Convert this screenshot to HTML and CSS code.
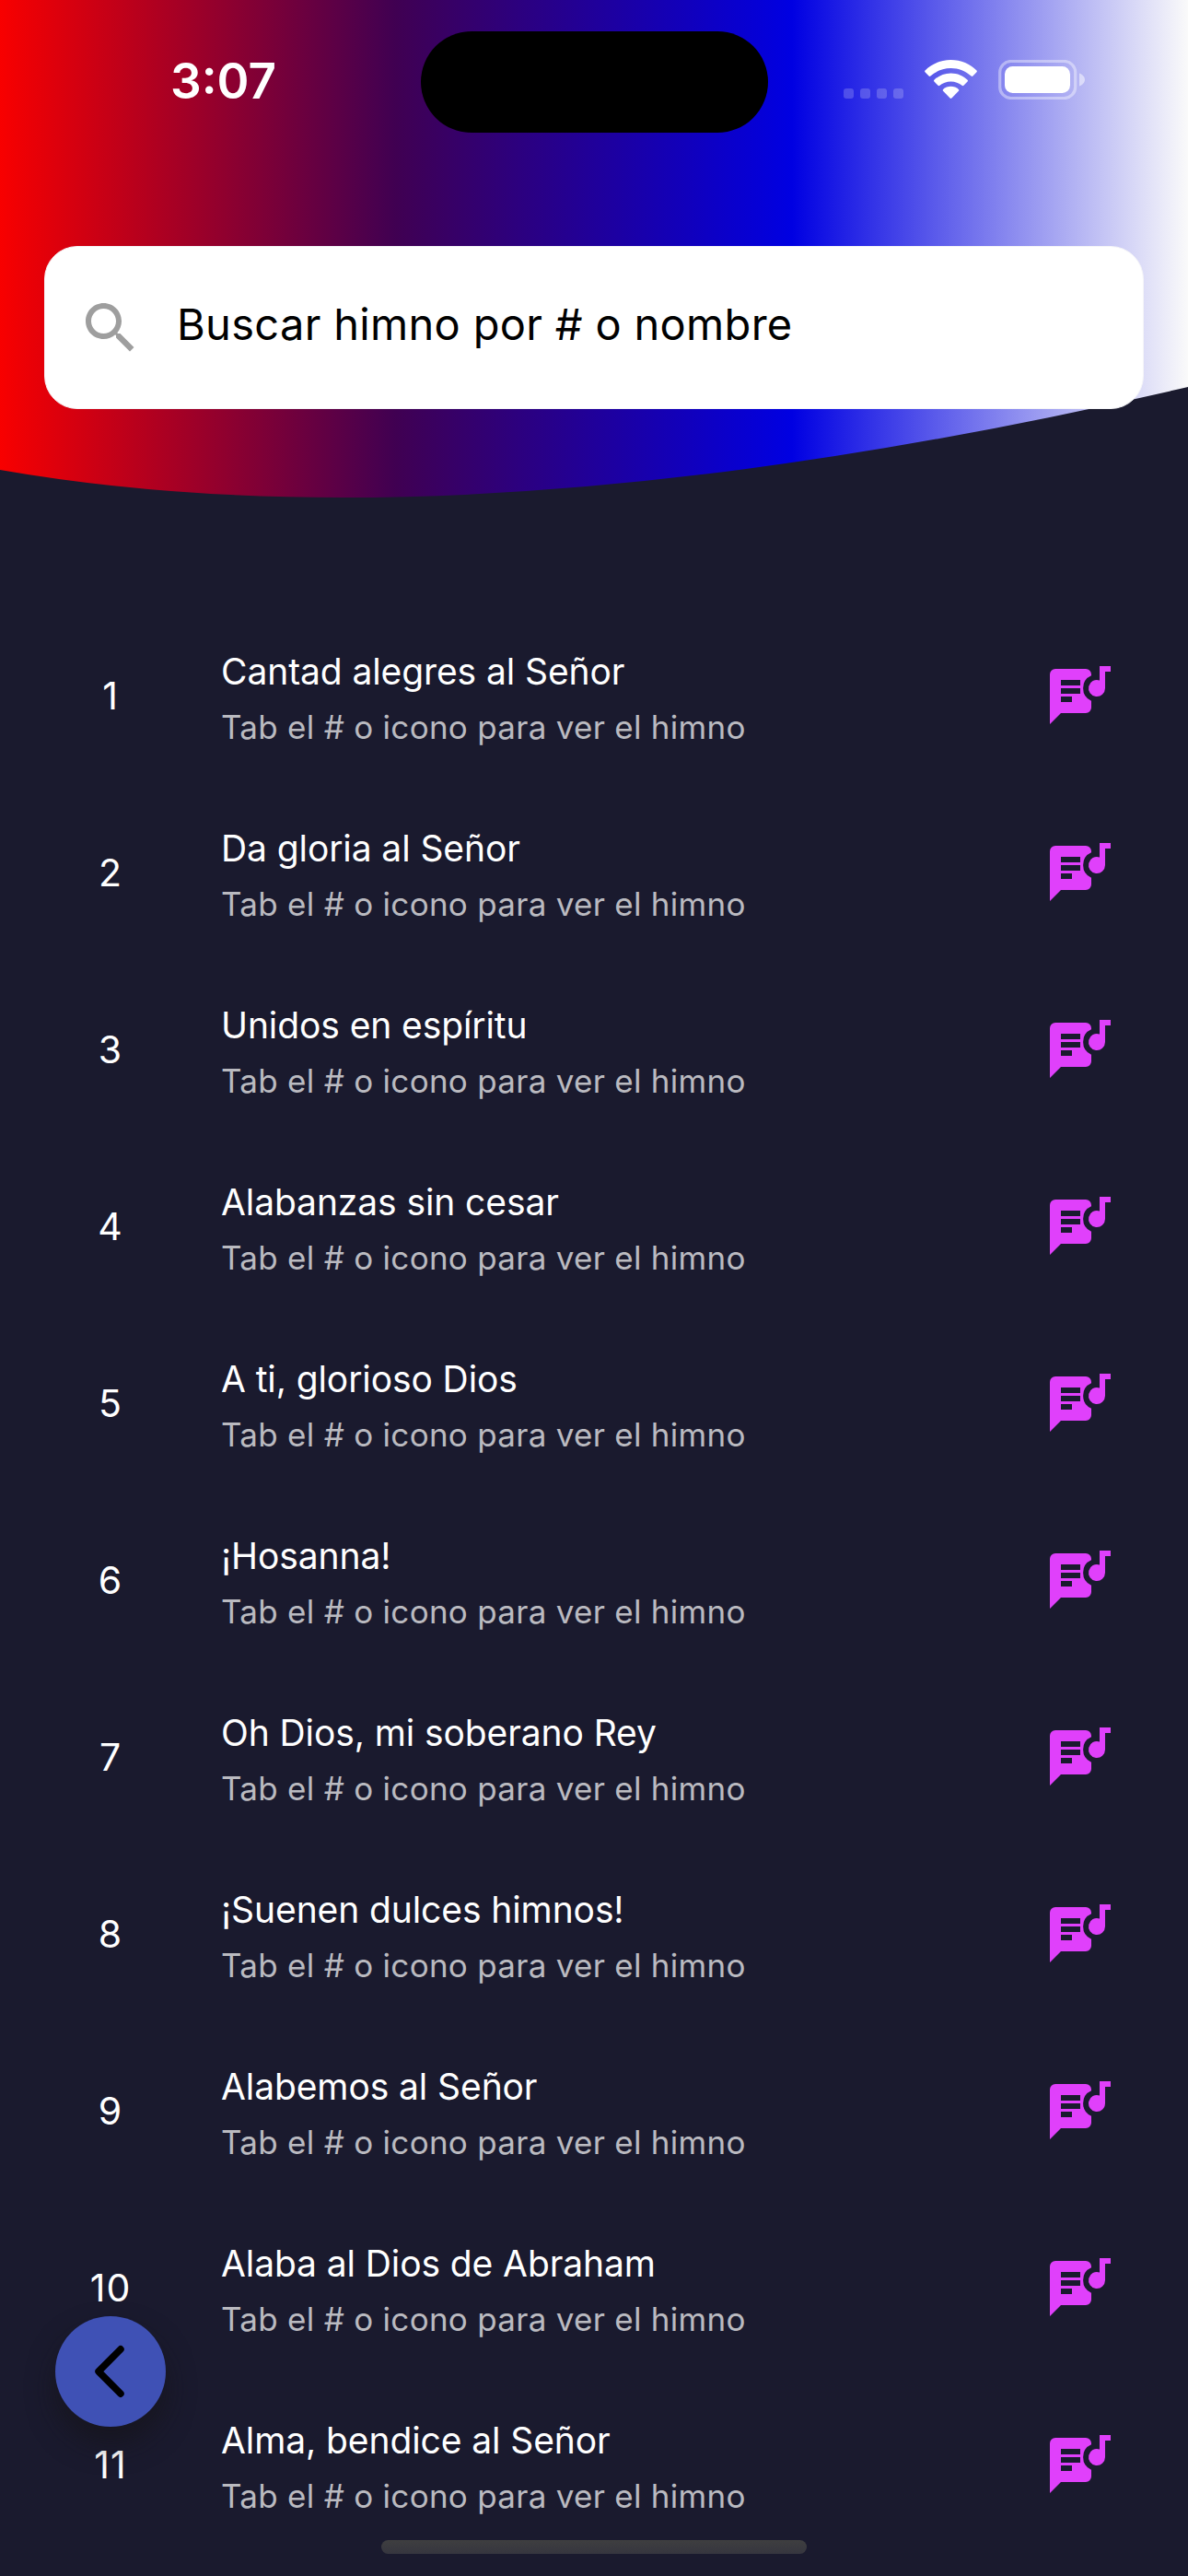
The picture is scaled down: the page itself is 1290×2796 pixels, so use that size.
FILE: index.html
```html
<!DOCTYPE html>
<html lang="es">
<head>
<meta charset="utf-8">
<title>Himnario</title>
<link rel="stylesheet" href="styles.css">
</head>
<body>
<svg class="defs" width="0" height="0" aria-hidden="true">
  <symbol id="lyrics" viewBox="0 0 66 63">
    <path fill-rule="evenodd" d="M6 3H39A6 6 0 0 1 45 9V10.3A15 15 0 0 0 45 37.7V45A6 6 0 0 1 39 51H12L0 63V9A6 6 0 0 1 6 3ZM12 15H33V21H12ZM12 24H33V30H12ZM12 33H24V39H12Z"/>
    <path d="M54 0H66V6H60V24A9 9 0 1 1 54 15.5Z"/>
  </symbol>
</svg>
<div class="screen">
  <header class="header">
    <svg class="header-bg" viewBox="0 0 1290 600" aria-hidden="true">
      <defs>
        <linearGradient id="flag" x1="0" x2="1" y1="0" y2="0">
          <stop offset="0" stop-color="#f80000"/>
          <stop offset=".3333" stop-color="#400052"/>
          <stop offset=".6667" stop-color="#0000e2"/>
          <stop offset="1" stop-color="#fafafa"/>
        </linearGradient>
      </defs>
      <path fill="url(#flag)" d="M0 0V510Q516 600 1290 420V0Z"/>
    </svg>
    <div class="status">
      <span class="time">3:07</span>
      <span class="island"></span>
      <div class="indicators">
        <div class="cell"><i></i><i></i><i></i><i></i></div>
        <svg class="wifi" viewBox="0 0 57 42" fill="#fff">
          <path d="M28.5 0C39.5 0 49.5 4.5 56.5 11.4Q57.3 12.3 56.5 13.2L52.4 17.6Q51.5 18.4 50.6 17.6C44.7 12.2 37 9 28.5 9S12.3 12.2 6.4 17.6Q5.5 18.4 4.6 17.6L.5 13.2Q-.3 12.3 .5 11.4C7.5 4.5 17.5 0 28.5 0Z"/>
          <path d="M28.5 14.5C35.5 14.5 41.9 17.3 46.6 21.7Q47.4 22.6 46.6 23.5L42.4 27.8Q41.5 28.6 40.6 27.8C37.4 25 33.1 23.4 28.5 23.4S19.6 25 16.4 27.8Q15.5 28.6 14.6 27.8L10.4 23.5Q9.6 22.6 10.4 21.7C15.1 17.3 21.5 14.5 28.5 14.5Z"/>
          <path d="M28.5 28.8C31.7 28.8 34.6 30 36.9 32Q37.7 32.9 36.9 33.8L29.4 41.6Q28.5 42.4 27.6 41.6L20.1 33.8Q19.3 32.9 20.1 32C22.4 30 25.3 28.8 28.5 28.8Z"/>
        </svg>
        <svg class="battery" viewBox="0 0 95 43">
          <rect x="1.7" y="1.5" width="82" height="40" rx="12" fill="none" stroke="#fff" stroke-opacity=".4" stroke-width="3.2"/>
          <rect x="7" y="7" width="71" height="29" rx="8.5" fill="#fff"/>
          <path d="M88 14.5C91.5 16 94 18.5 94 21.5S91.5 27 88 28.5Z" fill="#fff" fill-opacity=".5"/>
        </svg>
      </div>
    </div>
    <div class="search">
      <svg viewBox="0 0 24 24" fill="#9e9e9e"><path d="M15.5 14h-.79l-.28-.27C15.41 12.59 16 11.11 16 9.5 16 5.91 13.09 3 9.5 3S3 5.91 3 9.5 5.91 16 9.5 16c1.61 0 3.09-.59 4.23-1.57l.27.28v.79l5 4.99L20.49 19l-4.99-5zm-6 0C7.01 14 5 11.99 5 9.5S7.01 5 9.5 5 14 7.01 14 9.5 11.99 14 9.5 14z"/></svg>
      <span>Buscar himno por # o nombre</span>
    </div>
  </header>
  <main class="list">
    <div class="row"><span class="num">1</span><div class="text"><p class="title">Cantad alegres al Señor</p><p class="sub">Tab el # o icono para ver el himno</p></div><svg class="icon"><use href="#lyrics"/></svg></div>
    <div class="row"><span class="num">2</span><div class="text"><p class="title">Da gloria al Señor</p><p class="sub">Tab el # o icono para ver el himno</p></div><svg class="icon"><use href="#lyrics"/></svg></div>
    <div class="row"><span class="num">3</span><div class="text"><p class="title">Unidos en espíritu</p><p class="sub">Tab el # o icono para ver el himno</p></div><svg class="icon"><use href="#lyrics"/></svg></div>
    <div class="row"><span class="num">4</span><div class="text"><p class="title">Alabanzas sin cesar</p><p class="sub">Tab el # o icono para ver el himno</p></div><svg class="icon"><use href="#lyrics"/></svg></div>
    <div class="row"><span class="num">5</span><div class="text"><p class="title">A ti, glorioso Dios</p><p class="sub">Tab el # o icono para ver el himno</p></div><svg class="icon"><use href="#lyrics"/></svg></div>
    <div class="row"><span class="num">6</span><div class="text"><p class="title">¡Hosanna!</p><p class="sub">Tab el # o icono para ver el himno</p></div><svg class="icon"><use href="#lyrics"/></svg></div>
    <div class="row"><span class="num">7</span><div class="text"><p class="title">Oh Dios, mi soberano Rey</p><p class="sub">Tab el # o icono para ver el himno</p></div><svg class="icon"><use href="#lyrics"/></svg></div>
    <div class="row"><span class="num">8</span><div class="text"><p class="title">¡Suenen dulces himnos!</p><p class="sub">Tab el # o icono para ver el himno</p></div><svg class="icon"><use href="#lyrics"/></svg></div>
    <div class="row"><span class="num">9</span><div class="text"><p class="title">Alabemos al Señor</p><p class="sub">Tab el # o icono para ver el himno</p></div><svg class="icon"><use href="#lyrics"/></svg></div>
    <div class="row"><span class="num">10</span><div class="text"><p class="title">Alaba al Dios de Abraham</p><p class="sub">Tab el # o icono para ver el himno</p></div><svg class="icon"><use href="#lyrics"/></svg></div>
    <div class="row"><span class="num">11</span><div class="text"><p class="title">Alma, bendice al Señor</p><p class="sub">Tab el # o icono para ver el himno</p></div><svg class="icon"><use href="#lyrics"/></svg></div>
  </main>
  <div class="fab"><svg viewBox="0 0 120 120"><path d="M71 35.8L47 60L71 84.2" fill="none" stroke="#000" stroke-width="7.5" stroke-linecap="round" stroke-linejoin="round"/></svg></div>
  <div class="home"></div>
</div>
</body>
</html>
```
FILE: styles.css
```css
* { box-sizing: border-box; }
body { margin: 0; background: #1a1a2e; font-family: Inter, "Liberation Sans", sans-serif; }
p { margin: 0; }
.defs { position: absolute; }
.screen { position: relative; width: 1290px; height: 2796px; overflow: hidden; background: #1a1a2e; }
.header { position: relative; height: 659px; }
.header-bg { position: absolute; top: 0; left: 0; width: 1290px; height: 600px; }
.status { position: relative; display: grid; grid-template-columns: 457px 377px 1fr; height: 267px; padding-top: 34px; align-items: start; }
.time { padding: 23px 0 0 185px; font-size: 53px; line-height: 62px; font-weight: 600; color: #fff; letter-spacing: 0; }
.island { height: 110px; border-radius: 55px; background: #000; }
.indicators { display: flex; align-items: flex-end; padding: 31px 0 0 82px; }
.cell { display: flex; gap: 7px; padding-bottom: 1px; margin-right: 23px; }
.cell i { width: 11px; height: 11px; border-radius: 3px; background: rgba(255, 255, 255, .2); }
.wifi { width: 57px; height: 42px; margin: 0 23px 1px 0; }
.battery { width: 95px; height: 43px; }
.search { position: relative; display: flex; align-items: center; height: 177px; margin: 0 48px; padding-left: 35px; border: 1px solid #f5f5f8; border-radius: 36px; background: #fff; }
.search svg { width: 72px; height: 72px; margin-right: 36px; }
.search span { font-size: 47px; line-height: 60px; letter-spacing: .32px; color: #000; padding-bottom: 7px; white-space: nowrap; }
.row { display: grid; grid-template-columns: 144px 1fr 66px; align-items: center; height: 192px; padding: 0 84px 0 48px; }
.num { font-size: 41px; line-height: 50px; letter-spacing: 1px; color: #fff; text-align: center; }
.text { padding: 12px 0 0 48px; }
.title { font-size: 39px; line-height: 56px; letter-spacing: -.1px; color: #fff; white-space: nowrap; }
.sub { font-size: 35px; line-height: 64px; letter-spacing: .28px; color: #babac0; white-space: nowrap; }
.icon { width: 66px; height: 63px; margin-bottom: 2px; fill: #e040fb; }
.fab { position: absolute; left: 60px; top: 2514px; width: 120px; height: 120px; border-radius: 50%; background: #3f51b5; box-shadow: 0 18px 30px rgba(20, 18, 20, .55); }
.fab svg { display: block; width: 120px; height: 120px; }
.home { position: absolute; left: 414px; top: 2757px; width: 462px; height: 15px; border-radius: 8px; background: linear-gradient(#3e3e40, #36363f); }
```
